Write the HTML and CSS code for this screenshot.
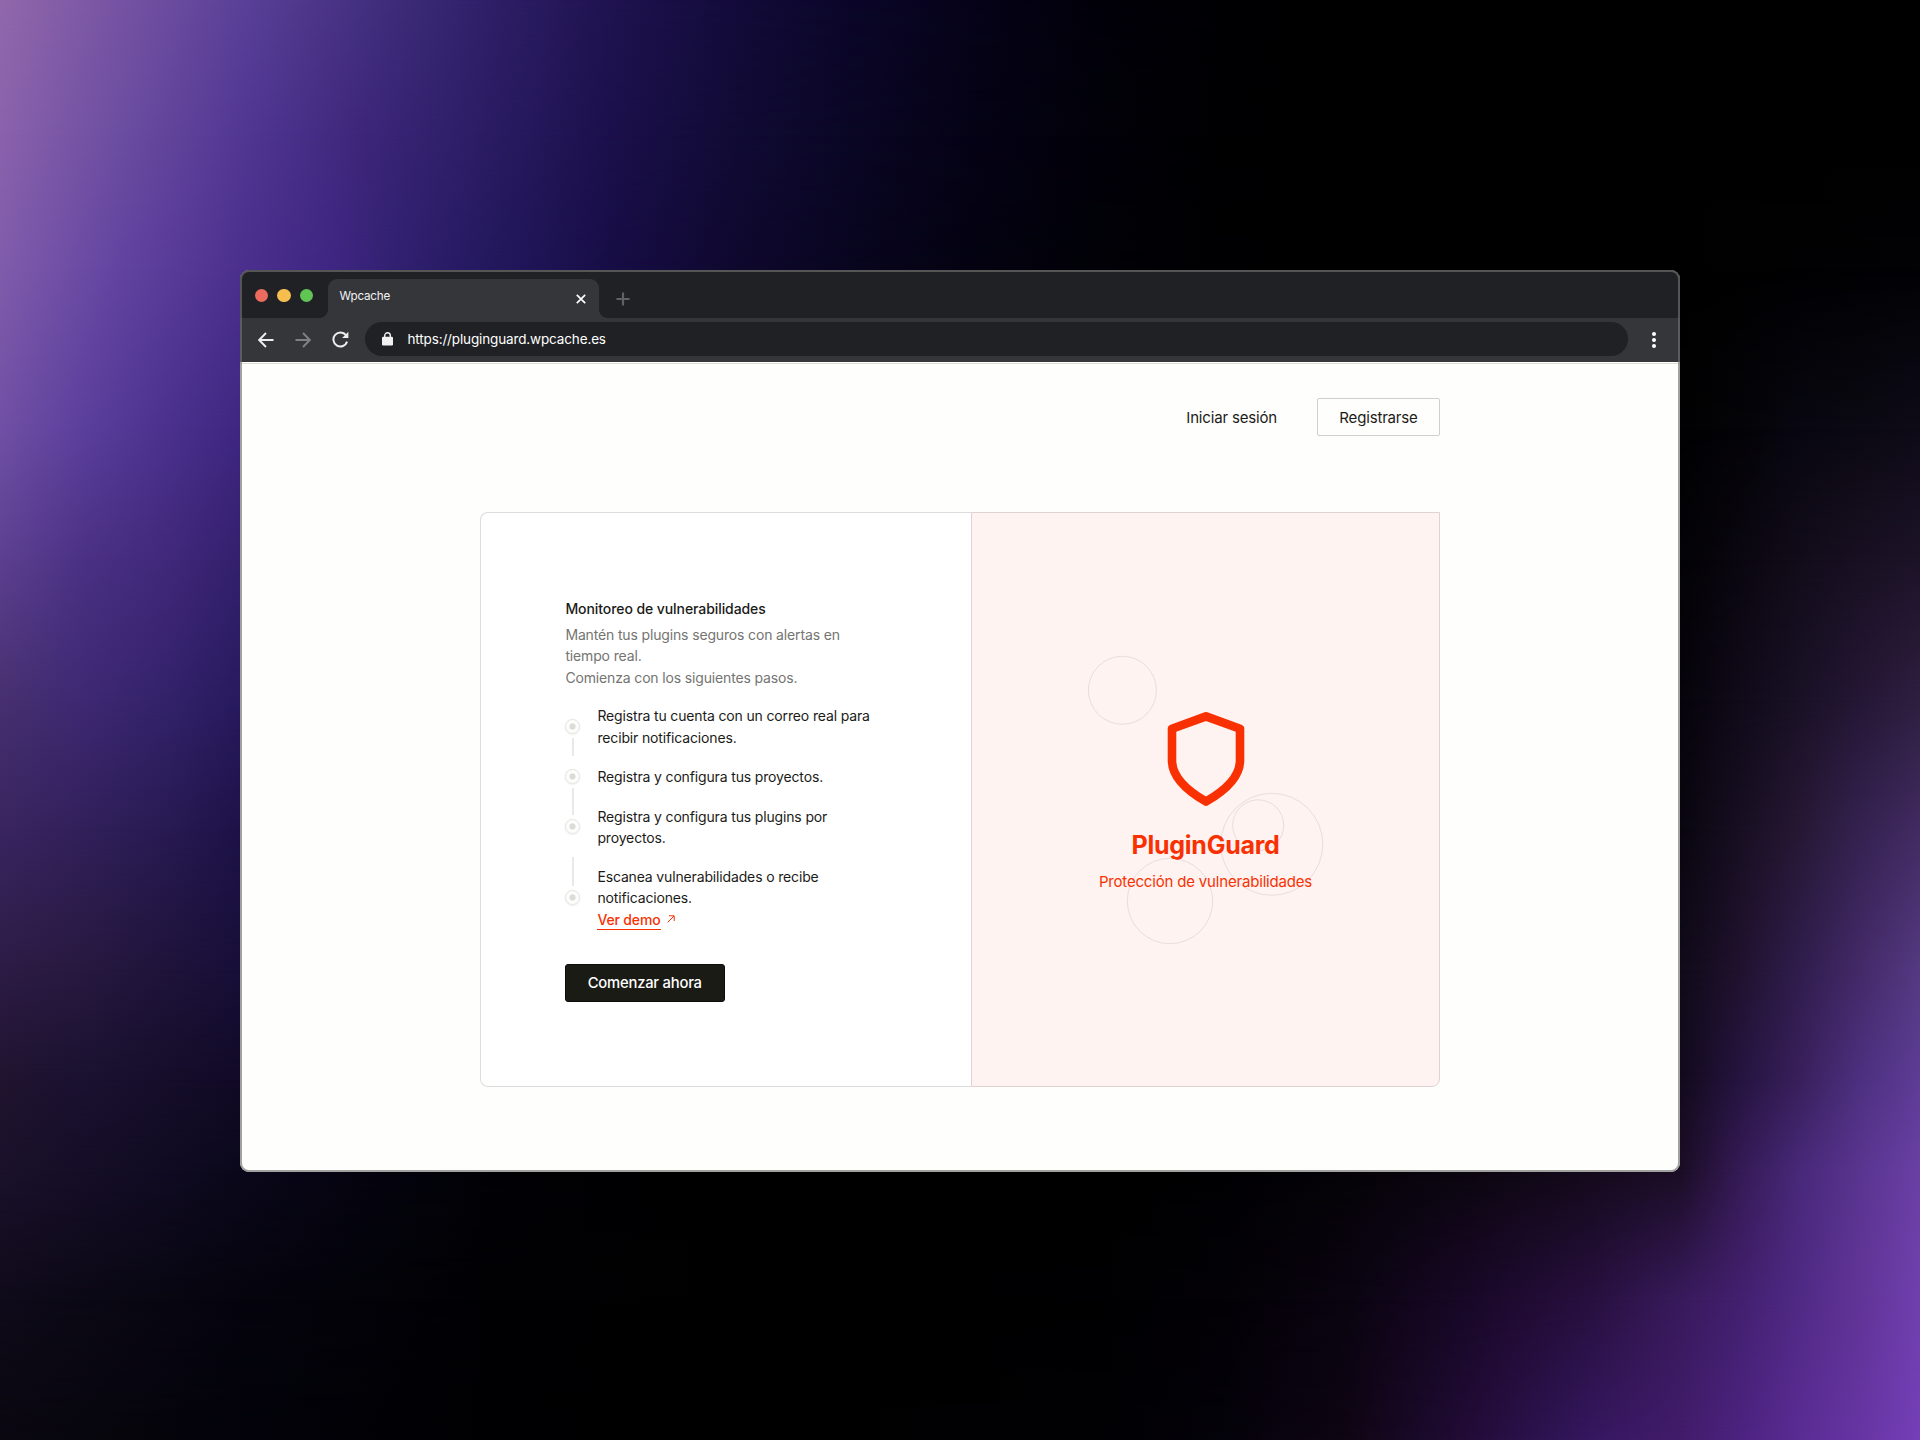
FILE: index.html
```html
<!DOCTYPE html>
<html lang="es">
<head>
<meta charset="utf-8">
<title>Wpcache</title>
<link rel="stylesheet" href="styles.css">
</head>
<body>
<div class="stage">
  <div class="glow glow-1"></div>
  <div class="glow glow-2"></div>
  <div class="glow glow-3"></div>
  <div class="glow glow-4"></div>
  <div class="glow glow-5"></div>
  <div class="glow glow-6"></div>
  <div class="glow glow-7"></div>
  <div class="glow glow-8"></div>
  <div class="glow glow-9"></div>
  <div class="glow glow-10"></div>
  <div class="glow glow-11"></div>
  <div class="glow glow-12"></div>

  <main class="window">
    <header class="tabbar">
      <div class="lights"><i class="light red"></i><i class="light yellow"></i><i class="light green"></i></div>
      <div class="tab">
        <span class="tab-title">Wpcache</span>
        <svg class="tab-close" width="10" height="10" viewBox="0 0 10 10"><path d="M.8.8l8.400 8.400M9.200.8L.8 9.200" stroke="#fff" stroke-width="1.700" fill="none"/></svg>
      </div>
      <svg class="tab-new" width="14" height="14" viewBox="0 0 14 14"><path d="M7 .5v13M.5 7h13" stroke="#606164" stroke-width="2.200" fill="none"/></svg>
    </header>
    <div class="toolbar">
      <svg class="nav-icon" width="16" height="16" viewBox="0 0 16 16"><path d="M15.5 8H1.5M8 1L1.2 8 8 15" stroke="#eceded" stroke-width="1.9" fill="none"/></svg>
      <svg class="nav-icon" width="16" height="16" viewBox="0 0 16 16"><path d="M.5 8h14M8 1l6.8 7L8 15" stroke="#7f8083" stroke-width="1.9" fill="none"/></svg>
      <svg class="nav-icon" width="17" height="17" viewBox="0 0 17 17"><path d="M14 4.2A7 7 0 1 0 15.1 10.6" stroke="#eceded" stroke-width="2" fill="none"/><path d="M16.4.8v6.3h-6.3z" fill="#eceded"/></svg>
      <div class="address">
        <svg width="11" height="14" viewBox="0 0 11 14"><rect y="4.8" width="11" height="8.7" rx="1.2" fill="#f1f1f2"/><path d="M2.7 5.5V3.6a2.8 2.8 0 0 1 5.6 0v1.9" stroke="#f1f1f2" stroke-width="1.4" fill="none"/></svg>
        <span>https://pluginguard.wpcache.es</span>
      </div>
      <svg class="menu" width="4" height="18" viewBox="0 0 4 18"><g fill="#fff"><circle cx="2" cy="3" r="2"/><circle cx="2" cy="9" r="2"/><circle cx="2" cy="15" r="2"/></g></svg>
    </div>

    <div class="page">
      <nav class="topnav">
        <a class="login">Iniciar sesión</a>
        <a class="register">Registrarse</a>
      </nav>
      <section class="card">
        <div class="intro">
          <h1>Monitoreo de vulnerabilidades</h1>
          <p class="lead">Mantén tus plugins seguros con alertas en<br>tiempo real.<br>Comienza con los siguientes pasos.</p>
          <div class="steps">
            <div class="rail">
              <i class="dot"></i><i class="line line-a"></i>
              <i class="dot"></i><i class="line line-b"></i>
              <i class="dot"></i><i class="line line-c"></i>
              <i class="dot"></i>
            </div>
            <div class="step-list">
              <p>Registra tu cuenta con un correo real para<br>recibir notificaciones.</p>
              <p>Registra y configura tus proyectos.</p>
              <p>Registra y configura tus plugins por<br>proyectos.</p>
              <p>Escanea vulnerabilidades o recibe<br>notificaciones.<br><a class="demo">Ver demo</a><svg class="arrow" width="8" height="8" viewBox="0 0 8 8"><path d="M.7 7.3L7 1M2 .8h5.2V6" stroke="#f93102" fill="none"/></svg></p>
            </div>
          </div>
          <a class="start">Comenzar ahora</a>
        </div>
        <div class="brand">
          <svg class="rings" width="468" height="574" viewBox="971 512 468 574">
            <g fill="none" stroke="#e8dddc">
              <circle cx="1122.4" cy="690.3" r="34"/>
              <circle cx="1271.8" cy="844.3" r="51"/>
              <circle cx="1258.2" cy="825.3" r="25.5"/>
              <circle cx="1170" cy="901" r="42.7"/>
            </g>
          </svg>
          <div class="brand-body">
            <svg class="shield" width="78" height="96" viewBox="0 0 78 96"><path d="M39 5.4L73 17.7V49.5C73 65 60 78.500 39 90.600C18 78.500 5 65 5 49.500V17.700Z" fill="none" stroke="#f93102" stroke-width="8.6" stroke-linejoin="round"/></svg>
            <h2>PluginGuard</h2>
            <p>Protección de vulnerabilidades</p>
          </div>
        </div>
      </section>
    </div>
  </main>
</div>
</body>
</html>
```
FILE: styles.css
```css
* { box-sizing: border-box; }

body {
  margin: 0;
  background: #000;
  font-family: Inter, "Liberation Sans", sans-serif;
}

h1, h2, p { margin: 0; font-weight: 400; }
svg { display: block; flex: none; }

/* Backdrop: each layer holds the colours of one height and fades in over the one above it. */
.stage {
  display: grid;
  width: 1920px;
  height: 1440px;
  overflow: hidden;
}
.glow {
  grid-area: 1 / 1;
  background: linear-gradient(90deg, var(--row));
  mask-image: linear-gradient(180deg, transparent var(--from), #000 var(--to));
}
.glow-1 { mask-image: none; --row: #9168ab 0, #7653a3 122px, #5a4098 245px, #43307f 367px, #2e1f68 490px, #1f1350 612px, #130b3a 735px, #0b0628 857px, #060318 980px, #020109 1102px, #010004 1224px, #000 1347px; }
.glow-2 { --from: 0px; --to: 135px; --row: #8a62ac 0, #6b4da0 122px, #513692 245px, #3c2679 367px, #2a1c63 490px, #1b104b 612px, #110b35 735px, #0a0624 857px, #050215 980px, #020109 1102px, #000002 1224px, #000 1347px; }
.glow-3 { --from: 135px; --to: 270px; --row: #805cab 0, #6143a0 122px, #4b2f8d 245px, #3f2683 330px, #30206f 400px, #23185e 490px, #170d45 612px, #0f082e 735px, #08051e 857px, #040210 980px, #010107 1102px, #000002 1224px, #000 1347px, #000 1680px, #020205 1920px; }
.glow-4 { --from: 270px; --to: 430px; --row: #7050a4 0, #5b3f9c 83px, #4b318d 167px, #3e2781 240px, #010102 1680px, #040307 1740px, #080711 1800px, #0b0912 1860px, #0e0b18 1920px; }
.glow-5 { --from: 430px; --to: 560px; --row: #5c4090 0, #4b3184 83px, #41287a 167px, #33206d 240px, #030205 1680px, #0a0710 1740px, #120c1a 1800px, #191022 1860px, #1d1328 1920px; }
.glow-6 { --from: 560px; --to: 700px; --row: #47306f 0, #3e2973 83px, #33226a 167px, #271a5e 240px, #06040b 1680px, #100a19 1740px, #1a1126 1800px, #241735 1860px, #2e1f40 1920px; }
.glow-7 { --from: 700px; --to: 830px; --row: #3a2560 0, #31205a 83px, #281a52 167px, #1d1247 240px, #09060f 1680px, #180f22 1740px, #261834 1800px, #352250 1860px, #422b62 1920px; }
.glow-8 { --from: 830px; --to: 970px; --row: #2c1c45 0, #27193f 83px, #1f133a 167px, #170f38 240px, #100a19 1680px, #20122e 1740px, #301d4d 1800px, #432a68 1860px, #543a82 1920px; }
.glow-9 { --from: 970px; --to: 1080px; --row: #20142f 0, #1b1130 83px, #150e2a 167px, #110a26 240px, #120a1c 1680px, #251440 1740px, #39205c 1800px, #4d3080 1860px, #5e3d96 1920px; }
.glow-10 { --from: 1080px; --to: 1172px; --row: #1b112b 0, #150e27 83px, #100b22 167px, #0b081b 240px, #05040f 367px, #020206 490px, #000 735px, #000 1102px, #010103 1224px, #050308 1347px, #0c0610 1470px, #140a1c 1592px, #1b0d25 1680px, #351a55 1740px, #48297a 1800px, #5a3590 1860px, #6a40a5 1920px; }
.glow-11 { --from: 1172px; --to: 1300px; --row: #0f0b1a 0, #05040d 245px, #010104 490px, #000 735px, #000002 1102px, #030106 1224px, #0a0410 1347px, #190828 1470px, #28103f 1592px, #381a5c 1680px, #43206f 1740px, #502a85 1800px, #613497 1860px, #7040ae 1920px; }
.glow-12 { --from: 1300px; --to: 1440px; --row: #0a0710 0, #06050c 122px, #03020a 245px, #000002 490px, #000 735px, #010003 1102px, #04020a 1224px, #0f0514 1347px, #220c38 1470px, #351760 1592px, #421c6b 1680px, #4c2380 1740px, #5a2c94 1800px, #6735a3 1860px, #743fb8 1920px; }

/* Browser window */
.window {
  grid-area: 1 / 1;
  position: relative;
  display: flex;
  flex-direction: column;
  width: 1440px;
  height: 902px;
  margin: 270px 0 0 240px;
  border-radius: 9px;
  overflow: hidden;
  background: #fefefc;
}
.window::after {
  content: "";
  position: absolute;
  inset: 0;
  border: 2px solid rgba(112, 112, 112, .66);
  border-radius: 9px;
}

.tabbar {
  display: flex;
  align-items: flex-end;
  height: 48px;
  background: #202124;
}
.lights { display: flex; gap: 9px; padding-left: 14.500px; height: 30px; width: 88px; }
.light { width: 13.600px; height: 13.600px; margin-top: .5px; border-radius: 50%; flex: none; }
.red { background: #ed6a5e; }
.yellow { background: #f5be4f; }
.green { background: #61c554; }
.tab {
  position: relative;
  display: flex;
  justify-content: space-between;
  width: 271px;
  height: 39px;
  padding: 9px 13.500px 0 11.500px;
  border-radius: 9px 9px 0 0;
  background: #35363a;
}
.tab::before, .tab::after {
  content: "";
  position: absolute;
  bottom: 0;
  width: 8px;
  height: 8px;
}
.tab::before { left: -8px; background: radial-gradient(circle at 0 0, transparent 7.500px, #35363a 8px); }
.tab::after { right: -8px; background: radial-gradient(circle at 100% 0, transparent 7.500px, #35363a 8px); }
.tab-title { margin-top: 1px; font-size: 11.700px; line-height: 15px; letter-spacing: -.2px; color: #f1f1f2; }
.tab-close { margin-top: 5.500px; }
.tab-new { margin: 0 0 12px 17px; }

.toolbar {
  display: flex;
  align-items: center;
  height: 44px;
  padding: 0 24.500px 5px 17.500px;
  background: #35363a;
}
.nav-icon { margin: 4.500px 21.400px 0 0; }
.nav-icon:nth-child(3) { margin-right: 16.200px; }
.address {
  display: flex;
  align-items: center;
  flex: 1;
  height: 34px;
  margin: 3px 23.500px 0 0;
  padding-left: 17px;
  gap: 14px;
  border-radius: 17px;
  background: #202124;
  color: #fff;
  font-size: 13.500px;
  letter-spacing: -.14px;
}
.menu { margin-top: 4px; }

/* Landing page */
.page {
  flex: 1;
  display: flex;
  flex-direction: column;
  align-items: center;
  padding-top: 34px;
  border-top: 1px solid #fefefc;
  box-shadow: inset 0 1px #deded4;
  color: #1b1b18;
}
.topnav {
  display: flex;
  justify-content: flex-end;
  align-items: center;
  gap: 40px;
  width: 960px;
  height: 40px;
  font-size: 15px;
  letter-spacing: -.17px;
}
.register {
  display: flex;
  align-items: center;
  justify-content: center;
  width: 123px;
  height: 38px;
  border: 1px solid #cfcfcd;
  border-radius: 2px;
}
.card {
  display: grid;
  grid-template-columns: 491px 469px;
  width: 960px;
  height: 575px;
  margin-top: 75px;
}
.intro {
  display: flex;
  flex-direction: column;
  padding: 85px 0 0 84.400px;
  border: 1px solid #dcdcda;
  border-right: 0;
  border-radius: 8px 0 0 8px;
  background: #fff;
  font-size: 14px;
  line-height: 21.400px;
  letter-spacing: -.15px;
}
h1 { font-size: 14px; font-weight: 500; line-height: 22px; letter-spacing: -.08px; }
.lead { margin-top: 4px; color: #747471; }
.steps { display: flex; gap: 17px; margin-top: 17px; }
.rail { display: flex; flex-direction: column; align-items: center; width: 15px; padding-top: 14px; }
.dot {
  width: 15px;
  height: 15px;
  flex: none;
  border: 1px solid #e3e3e0;
  border-radius: 50%;
  background: radial-gradient(circle, #dbdbd7 2.800px, #fdfdfc 3.400px);
  box-shadow: 0 0 1px rgba(0, 0, 0, .06), 0 1px 2px rgba(0, 0, 0, .06);
}
.line { width: 1.500px; flex: none; background: #e8e8e6; }
.line-a { height: 18px; margin: 4px 0 13px; }
.line-b { height: 27px; margin: 4px 0 4px; }
.line-c { height: 29px; margin: 23px 0 4px; }
.step-list { display: flex; flex-direction: column; gap: 18px; line-height: 21.300px; }
.step-list p:nth-child(3) { margin-top: .6px; margin-bottom: -.3px; }
.demo {
  display: inline-block;
  border-bottom: 1px solid #f93102;
  color: #f93102;
  font-weight: 500;
  line-height: 19px;
}
.arrow { display: inline-block; margin-left: 6px; vertical-align: 1.500px; }
.start {
  display: flex;
  align-items: center;
  justify-content: center;
  width: 159.500px;
  height: 38px;
  margin: 34px 0 0 -.4px;
  padding-top: 1px;
  border: 1px solid #0c0c0a;
  border-radius: 3px;
  background: #1b1b16;
  color: #fff;
  font-size: 14.800px;
  letter-spacing: -.22px;
  font-weight: 500;
}

.brand {
  display: grid;
  border: 1px solid #dfd2d0;
  border-radius: 0 0 8px 0;
  background: #fef3f1;
  color: #f93102;
  text-align: center;
}
.rings, .brand-body { grid-area: 1 / 1; margin-left: -1px; }
.rings { margin-top: -1px; }
.brand-body {
  display: flex;
  flex-direction: column;
  align-items: center;
  padding-top: 197.500px;
  padding-left: 1px;
}
h2 { margin-top: 22px; font-size: 25px; font-weight: 700; line-height: 32px; letter-spacing: -.25px; }
.brand p { margin-top: 10px; font-size: 15px; line-height: 22px; letter-spacing: -.18px; }
```
